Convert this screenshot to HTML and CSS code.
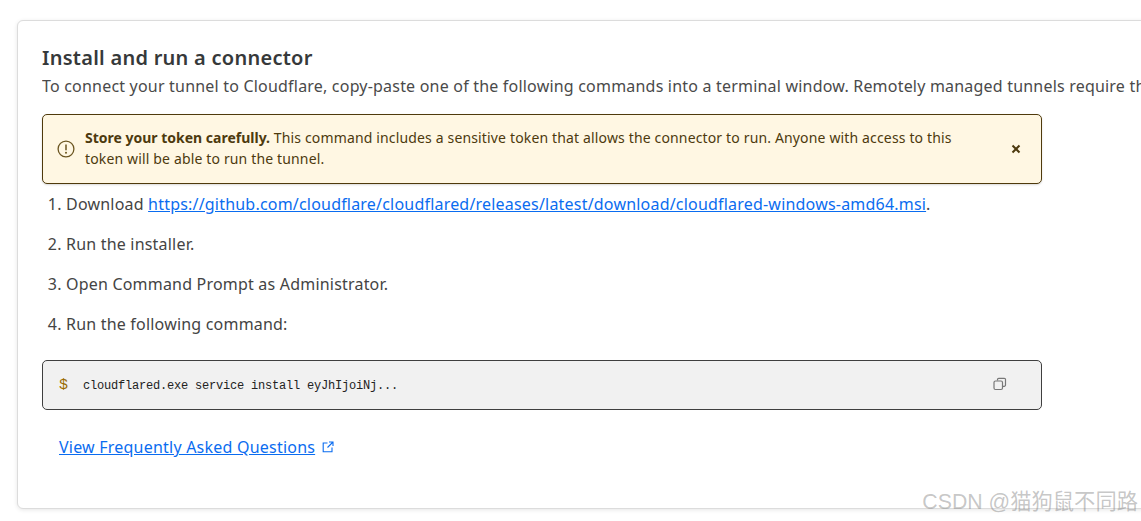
FILE: index.html
```html
<!DOCTYPE html>
<html lang="en">
<head>
<meta charset="utf-8">
<title>Install and run a connector</title>
<link rel="stylesheet" href="styles.css">
</head>
<body>
<main class="page">
  <section class="card">
    <h2 class="title">Install and run a connector</h2>
    <p class="lead">To connect your tunnel to Cloudflare, copy-paste one of the following commands into a terminal window. Remotely managed tunnels require that you install cloudflared.</p>
    <div class="alert">
      <svg class="alert-icon" viewBox="0 0 18 18" width="18" height="18" aria-hidden="true">
        <circle cx="9" cy="9" r="7.9" fill="none" stroke="#6b5520" stroke-width="1.3"/>
        <path d="M9 4.6v5.6" stroke="#6b5520" stroke-width="1.5" fill="none"/>
        <circle cx="9" cy="12.7" r="1" fill="#6b5520"/>
      </svg>
      <p class="alert-text"><strong>Store your token carefully.</strong> This command includes a sensitive token that allows the connector to run. Anyone with access to this token will be able to run the tunnel.</p>
      <svg class="alert-close" viewBox="0 0 10 10" width="10" height="10" aria-hidden="true">
        <path d="M1.5 1.5l7 7M8.5 1.5l-7 7" stroke="#4d3a0e" stroke-width="2" fill="none"/>
      </svg>
    </div>
    <ol class="steps">
      <li>Download <a href="#">https://github.com/cloudflare/cloudflared/releases/latest/download/cloudflared-windows-amd64.msi</a>.</li>
      <li>Run the installer.</li>
      <li>Open Command Prompt as Administrator.</li>
      <li>Run the following command:</li>
    </ol>
    <div class="code">
      <span class="prompt">$</span>
      <code class="command">cloudflared.exe service install eyJhIjoiNj...</code>
      <svg class="copy" viewBox="0 0 14 14" width="14" height="14" aria-hidden="true">
        <rect x="1" y="4" width="8.5" height="8.5" rx="1.5" fill="none" stroke="#777" stroke-width="1.2"/>
        <path d="M4.5 3.6V2.5a1.2 1.2 0 0 1 1.2-1.2h5.6a1.2 1.2 0 0 1 1.2 1.2v5.6a1.2 1.2 0 0 1-1.2 1.2H10" fill="none" stroke="#777" stroke-width="1.2"/>
      </svg>
    </div>
    <p class="faq">
      <a href="#">View Frequently Asked Questions</a>
      <svg class="ext" viewBox="0 0 12 12" width="12" height="12" aria-hidden="true">
        <path d="M5.5 2H1.2v8.8H10V6.5M7 1h4v4M11 1L5.5 6.5" fill="none" stroke="#0a6cf0" stroke-width="1.1"/>
      </svg>
    </p>
  </section>
</main>
<div class="watermark">CSDN @猫狗鼠不同路</div>
</body>
</html>
```
FILE: styles.css
```css
html, body {
  margin: 0;
  height: 100%;
  overflow: hidden;
  background: #fff;
}
body {
  position: relative;
  font-family: "Noto Sans", "Open Sans", sans-serif;
  color: #3d3d3d;
}
.page {
  padding: 20px 0 0 17px;
  width: 1124px;
  overflow: hidden;
}
.card {
  box-sizing: border-box;
  width: 1300px;
  height: 489px;
  margin-bottom: 8px;
  padding: 23px 24px 0;
  border: 1px solid #dcdcdc;
  border-radius: 6px;
  box-shadow: 0 1px 4px rgba(0, 0, 0, 0.1);
  background: #fff;
}
.title {
  margin: 0;
  font-size: 20px;
  line-height: 28px;
  font-weight: 600;
  letter-spacing: 0.26px;
  color: #36393a;
}
.lead {
  margin: 2px 0 0;
  font-size: 16px;
  line-height: 24px;
  letter-spacing: 0.2px;
  white-space: nowrap;
  overflow: hidden;
  width: 1100px;
  color: #4a4a4a;
}
.alert {
  box-sizing: border-box;
  display: flex;
  align-items: center;
  width: 1000px;
  height: 70px;
  margin-top: 16px;
  padding: 0 20px 0 14px;
  border: 1px solid #4f3a0c;
  border-radius: 5px;
  background: #fff7e3;
  box-shadow: 0 1px 2px rgba(0, 0, 0, 0.15);
  color: #4d3a0e;
}
.alert-icon {
  flex: none;
  margin-right: 10px;
}
.alert-text {
  flex: 1;
  margin: -2px 0 0;
  max-width: 880px;
  font-size: 14px;
  line-height: 21px;
  letter-spacing: 0.15px;
}
.alert-text strong {
  font-weight: 700;
  letter-spacing: 0;
}
.alert-close {
  flex: none;
  margin-left: auto;
}
.steps {
  margin: 0;
  padding: 0 0 0 24px;
  font-size: 16px;
  line-height: 24px;
  letter-spacing: 0.2px;
  color: #444;
}
.steps li {
  margin-top: 16px;
}
.steps li:first-child {
  margin-top: 8px;
}
.steps a, .faq a {
  color: #0a6cf0;
}
.code {
  box-sizing: border-box;
  display: flex;
  align-items: center;
  width: 1000px;
  height: 50px;
  margin-top: 24px;
  padding: 0 34px 0 16px;
  border: 1px solid #3f3f3f;
  border-radius: 5px;
  background: #f1f1f1;
}
.prompt {
  font-family: "Liberation Mono", monospace;
  font-size: 15px;
  color: #9a6b00;
}
.command {
  margin: 1px 0 0 15px;
  font-family: "Liberation Mono", monospace;
  font-size: 12px;
  letter-spacing: -0.2px;
  color: #222;
}
.copy {
  margin: -2px 0 0 auto;
}
.faq {
  display: flex;
  align-items: center;
  gap: 7px;
  margin: 25px 0 0 17px;
  font-size: 16px;
  line-height: 24px;
  letter-spacing: 0.22px;
}
.watermark {
  position: absolute;
  right: 3px;
  bottom: 6px;
  font-family: "Liberation Sans", "Noto Sans CJK SC", sans-serif;
  font-size: 21.3px;
  color: rgba(130, 130, 130, 0.45);
}
```
